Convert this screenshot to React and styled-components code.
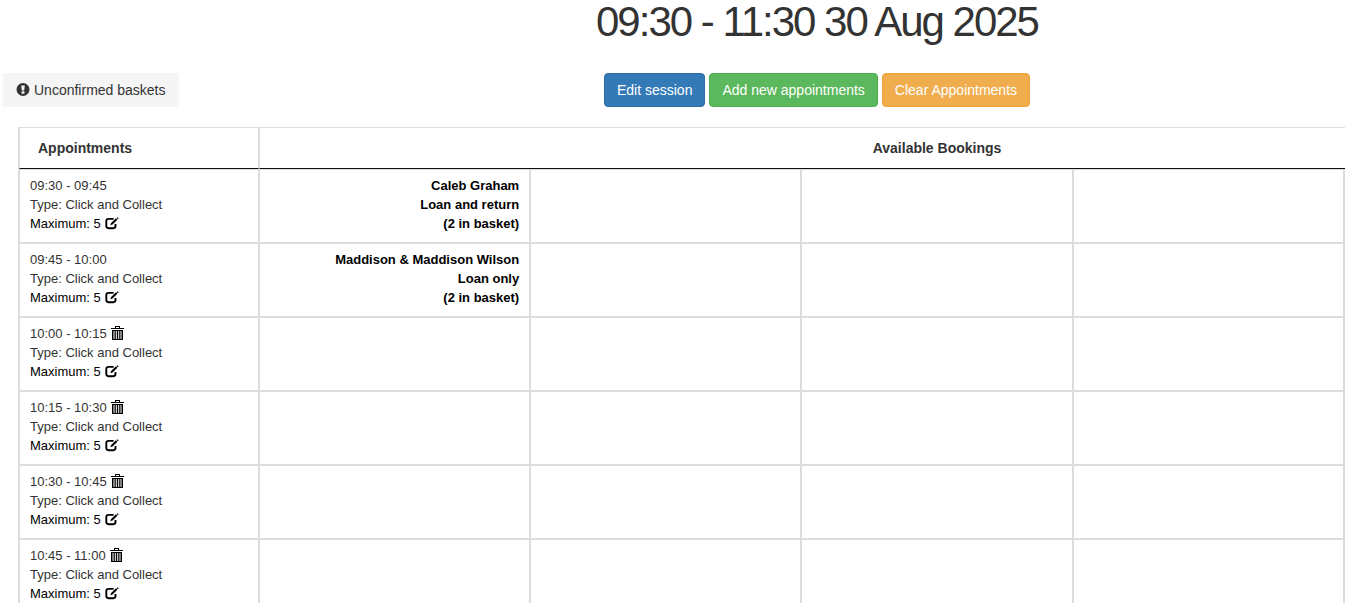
import React from 'react';
import styled, { createGlobalStyle } from 'styled-components';

const BOOKING_COLUMNS = 5;

const appointments = [
  {
    time: '09:30 - 09:45',
    type: 'Click and Collect',
    maximum: 5,
    bookings: [{ name: 'Caleb Graham', action: 'Loan and return', basket: 2 }],
  },
  {
    time: '09:45 - 10:00',
    type: 'Click and Collect',
    maximum: 5,
    bookings: [{ name: 'Maddison & Maddison Wilson', action: 'Loan only', basket: 2 }],
  },
  { time: '10:00 - 10:15', type: 'Click and Collect', maximum: 5, bookings: [] },
  { time: '10:15 - 10:30', type: 'Click and Collect', maximum: 5, bookings: [] },
  { time: '10:30 - 10:45', type: 'Click and Collect', maximum: 5, bookings: [] },
  { time: '10:45 - 11:00', type: 'Click and Collect', maximum: 5, bookings: [] },
];

const GlobalStyle = createGlobalStyle`
  *, *::before, *::after {
    box-sizing: border-box;
  }

  body {
    margin: 0;
    background: #fff;
    color: #333;
    font-family: "Liberation Sans", Arial, Helvetica, sans-serif;
    font-size: 14px;
    line-height: 20px;
  }
`;

const Scroller = styled.div`
  overflow-x: auto;
  scrollbar-width: none;
`;

const Page = styled.main`
  min-width: 1634px;
`;

const Title = styled.h1`
  margin: 0;
  font-size: 42px;
  font-weight: 400;
  line-height: 44px;
  letter-spacing: -2px;
  text-align: center;
`;

const Toolbar = styled.div`
  display: grid;
  grid-template-columns: 1fr auto 1fr;
  align-items: center;
  margin-top: 29px;
  padding: 0 3px;
`;

const ButtonGroup = styled.div`
  display: flex;
  gap: 4px;
`;

const variants = {
  primary: { background: '#337ab7', border: '#2e6da4' },
  success: { background: '#5cb85c', border: '#4cae4c' },
  warning: { background: '#f0ad4e', border: '#eea236' },
};

const Button = styled.button`
  padding: 6px 12px;
  border: 1px solid ${({ $variant }) => variants[$variant].border};
  border-radius: 4px;
  background: ${({ $variant }) => variants[$variant].background};
  color: #fff;
  font: inherit;
  cursor: pointer;
`;

const BasketsButton = styled.button`
  display: flex;
  align-items: center;
  justify-self: start;
  gap: 4px;
  padding: 7px 13px;
  border: 0;
  background: #f5f5f5;
  color: #333;
  font: inherit;
  cursor: pointer;
`;

const TableWrapper = styled.div`
  margin-top: 20px;
  padding: 0 18px;
`;

const Table = styled.table`
  width: 100%;
  table-layout: fixed;
  border: 1px solid #ddd;
  border-collapse: separate;
  border-spacing: 0;
`;

const HeaderCell = styled.th`
  width: ${({ $width }) => $width || 'auto'};
  padding: 10px 18px;
  border: 1px solid #ddd;
  border-top: 0;
  border-bottom-color: #111;
  text-align: ${({ $align }) => $align};
`;

const Cell = styled.td`
  padding: 6px 10px 9px;
  border: 1px solid #ddd;
  font-size: 13px;
  line-height: 19px;
  vertical-align: top;
`;

const BookingCell = styled(Cell)`
  color: #000;
  font-weight: 700;
  text-align: right;
`;

const Line = styled.div`
  display: flex;
  align-items: center;
  gap: 4px;
  color: ${({ $dark }) => ($dark ? '#000' : 'inherit')};
`;

const IconButton = styled.button`
  display: flex;
  padding: 0;
  border: 0;
  background: none;
  color: #000;
  cursor: pointer;
`;

const AlertIcon = () => (
  <svg width="14" height="14" viewBox="0 0 14 14" aria-hidden="true">
    <circle cx="7" cy="6.5" r="6.5" fill="currentColor" />
    <path d="M5.2 2.6h3.6l-.6 4.8H5.8z M5.6 8.3h2.8v2.4H5.6z" fill="#f5f5f5" />
  </svg>
);

const EditIcon = () => (
  <svg width="14" height="13" viewBox="0 0 14 13" aria-hidden="true">
    <path
      d="M8.6 1.9H3.4Q1.3 1.9 1.3 4V9.1Q1.3 11.2 3.4 11.2H8.4Q10.5 11.2 10.5 9.1V7"
      fill="none"
      stroke="currentColor"
      strokeWidth="1.9"
    />
    <path d="M5.3 8.2l.8-2.2 4.9-4.7 1.4 1.4-4.9 4.7z M11.5.9l.8-.7 1.4 1.3-.7.8z" fill="currentColor" />
  </svg>
);

const TrashIcon = () => (
  <svg width="13" height="16" viewBox="0 0 13 16" aria-hidden="true">
    <path
      d="M4 0h5v2h4v1H0V2h4z M5 1v1h3V1z M1 4h11v10H1z M2.5 5v8h1V5z M4.8 5v8h1V5z M7.2 5v8h1V5z M9.5 5v8h1V5z"
      fill="currentColor"
      fillRule="evenodd"
    />
  </svg>
);

const AppointmentRow = ({ appointment }) => {
  const { time, type, maximum, bookings } = appointment;

  return (
    <tr>
      <Cell>
        <Line>
          {time}
          {bookings.length === 0 && (
            <IconButton type="button" aria-label={`Delete ${time}`}>
              <TrashIcon />
            </IconButton>
          )}
        </Line>
        <Line>Type: {type}</Line>
        <Line $dark>
          <span>Maximum: {maximum}</span>
          <IconButton type="button" aria-label={`Edit maximum for ${time}`}>
            <EditIcon />
          </IconButton>
        </Line>
      </Cell>
      {Array.from({ length: BOOKING_COLUMNS }, (_, index) => {
        const booking = bookings[index];
        return (
          <BookingCell key={index}>
            {booking && (
              <>
                <div>{booking.name}</div>
                <div>{booking.action}</div>
                <div>({booking.basket} in basket)</div>
              </>
            )}
          </BookingCell>
        );
      })}
    </tr>
  );
};

const App = () => {
  return (
    <Scroller>
      <GlobalStyle />
      <Page>
        <Title>09:30 - 11:30 30 Aug 2025</Title>
        <Toolbar>
          <BasketsButton type="button">
            <AlertIcon />
            Unconfirmed baskets
          </BasketsButton>
          <ButtonGroup>
            <Button type="button" $variant="primary">Edit session</Button>
            <Button type="button" $variant="success">Add new appointments</Button>
            <Button type="button" $variant="warning">Clear Appointments</Button>
          </ButtonGroup>
        </Toolbar>
        <TableWrapper>
          <Table>
            <thead>
              <tr>
                <HeaderCell scope="col" $width="240px" $align="left">Appointments</HeaderCell>
                <HeaderCell scope="colgroup" colSpan={BOOKING_COLUMNS} $align="center">
                  Available Bookings
                </HeaderCell>
              </tr>
            </thead>
            <tbody>
              {appointments.map((appointment) => (
                <AppointmentRow key={appointment.time} appointment={appointment} />
              ))}
            </tbody>
          </Table>
        </TableWrapper>
      </Page>
    </Scroller>
  );
};

export default App;
